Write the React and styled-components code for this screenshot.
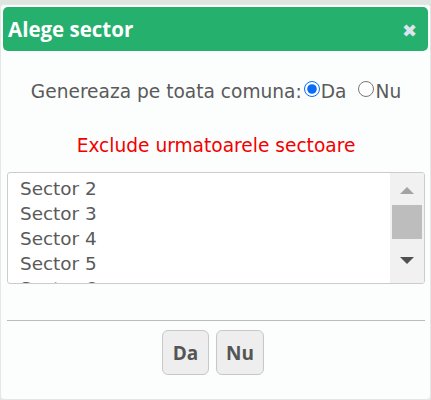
import React, { useState } from "react"
import styled, { createGlobalStyle } from "styled-components"

const GlobalStyle = createGlobalStyle`
  html, body {
    margin: 0;
    padding: 0;
    background: #dfe6e2;
  }
`

const Dialog = styled.div`
  width: 431px;
  height: 396px;
  margin-top: 4px;
  box-sizing: border-box;
  background: #fcfefd;
  border: 1px solid #e3e8e5;
  border-radius: 4px;
  padding: 2px 2px 0 2px;
  display: flex;
  flex-direction: column;
  font-family: "DejaVu Sans", "Lucida Grande", sans-serif;
`

const TitleBar = styled.div`
  height: 44px;
  background: #25b06e;
  border-radius: 5px;
  display: flex;
  align-items: center;
  justify-content: space-between;
  padding: 0 11px 0 5px;
`

const Title = styled.span`
  font-family: "Open Sans", sans-serif;
  font-weight: 700;
  font-size: 20.5px;
  color: #fff;
`

const Close = styled.span`
  color: #dde4ee;
  font-size: 18px;
  font-weight: 700;
  line-height: 1;
  margin-top: 3px;
  cursor: pointer;
`

const Body = styled.div`
  padding: 0 3px 0 4px;
  display: flex;
  flex-direction: column;
`

const RadioRow = styled.div`
  margin-top: 30px;
  text-align: center;
  font-size: 18.6px;
  color: #5a5a5a;
  display: flex;
  justify-content: center;
  align-items: center;
`

const Radio = styled.input`
  margin: 0 1px 0 2px;
  width: 16px;
  height: 16px;
  accent-color: #0a6cf5;
  position: relative;
  top: -3px;
`

const Opt = styled.label`
  display: inline-flex;
  align-items: center;
  margin-right: ${p => p.$gap || 0}px;
`

const Warning = styled.div`
  margin-top: 33px;
  text-align: center;
  color: #f20000;
  font-size: 18.6px;
`

const ListBox = styled.div`
  margin-top: 16px;
  height: 112px;
  box-sizing: border-box;
  border: 1px solid #cccccc;
  border-radius: 3px;
  display: flex;
  overflow: hidden;
  background: #fff;
`

const Items = styled.div`
  flex: 1;
  padding: 3px 0 0 12px;
  overflow: hidden;
`

const Item = styled.div`
  font-size: 18.4px;
  line-height: 25px;
  height: 25px;
  color: #5a5a5a;
`

const ScrollBar = styled.div`
  width: 34px;
  background: #f1f1f1;
  display: flex;
  flex-direction: column;
  align-items: center;
  padding-top: 14px;
`

const Arrow = styled.div`
  width: 0;
  height: 0;
  border-left: 7px solid transparent;
  border-right: 7px solid transparent;
  ${p => p.$down
    ? "border-top: 7px solid #505050; margin-top: 18px;"
    : "border-bottom: 7px solid #a3a3a3;"}
`

const Thumb = styled.div`
  width: 30px;
  height: 34px;
  margin-top: 11px;
  background: #bdbdbd;
`

const Divider = styled.div`
  margin-top: 36px;
  border-top: 1px solid #bbbbbb;
`

const ButtonRow = styled.div`
  display: flex;
  justify-content: center;
  gap: 7px;
  margin-top: 9px;
  padding-right: 6px;
`

const Button = styled.button`
  height: 45px;
  width: ${p => p.$w}px;
  padding: 0;
  background: #eeeeee;
  border: 1px solid #c8c8c8;
  border-radius: 6px;
  font-family: "Open Sans", sans-serif;
  font-weight: 700;
  font-size: 19px;
  color: #555;
  cursor: pointer;
`

const App = () => {
  const [all, setAll] = useState("da")
  return (
    <>
      <GlobalStyle />
      <Dialog>
        <TitleBar>
          <Title>Alege sector</Title>
          <Close>✖</Close>
        </TitleBar>
        <Body>
          <RadioRow>
            Genereaza pe toata comuna:
            <Opt $gap={10}>
              <Radio type="radio" name="all" checked={all === "da"} onChange={() => setAll("da")} />Da
            </Opt>
            <Opt>
              <Radio type="radio" name="all" checked={all === "nu"} onChange={() => setAll("nu")} />Nu
            </Opt>
          </RadioRow>
          <Warning>Exclude urmatoarele sectoare</Warning>
          <ListBox>
            <Items>
              {[2, 3, 4, 5, 6].map(n => <Item key={n}>Sector {n}</Item>)}
            </Items>
            <ScrollBar>
              <Arrow />
              <Thumb />
              <Arrow $down />
            </ScrollBar>
          </ListBox>
          <Divider />
          <ButtonRow>
            <Button $w={47}>Da</Button>
            <Button $w={48}>Nu</Button>
          </ButtonRow>
        </Body>
      </Dialog>
    </>
  )
}

export default App
